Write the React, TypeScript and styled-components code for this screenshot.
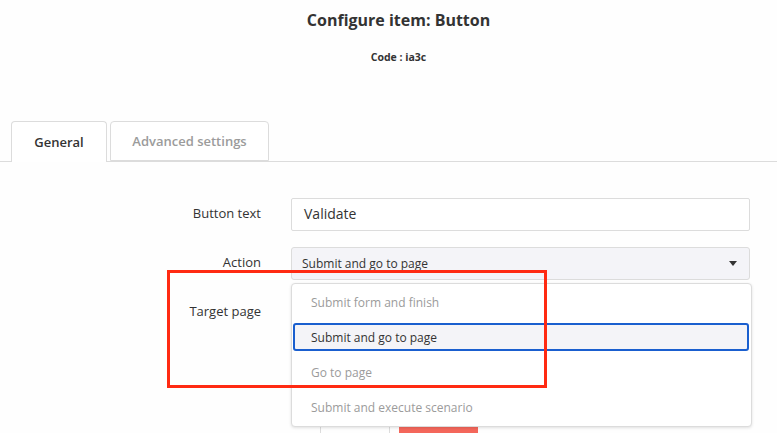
import React from 'react';
import styled, { createGlobalStyle } from 'styled-components';

const colors = {
  TEXT: '#333333',
  MUTED: '#9b9b9b',
  BORDER: '#dcdcdc',
  FIELD: '#f4f4f8',
  BLUE: '#1a5fcf',
  ANNOTATION: '#ff2a12',
  SALMON: '#f4675b',
};

const GlobalStyle = createGlobalStyle`
  html, body {
    margin: 0;
    padding: 0;
    background: #fefefe;
    height: 433px;
    overflow: hidden;
  }
  body {
    font-family: 'Open Sans', 'Liberation Sans', sans-serif;
    color: ${colors.TEXT};
  }
  * { box-sizing: border-box; }
`;

const Page = styled.div`
  width: 777px;
  height: 433px;
  position: relative;
  overflow: hidden;
`;

const Header = styled.header`
  padding: 9px 0 0 20px;
  text-align: center;
`;

const Title = styled.h1`
  margin: 0;
  font-size: 16px;
  line-height: 22px;
  font-weight: 700;
`;

const Code = styled.div`
  margin-top: 19px;
  font-size: 10.5px;
  line-height: 14px;
  font-weight: 700;
`;

const TabBar = styled.div`
  display: flex;
  align-items: flex-end;
  gap: 3px;
  margin-top: 57px;
  padding-left: 11px;
  height: 41px;
  border-bottom: 1px solid ${colors.BORDER};
`;

const Tab = styled.div<{ $active?: boolean }>`
  height: ${(p) => (p.$active ? '41px' : '40px')};
  margin-bottom: ${(p) => (p.$active ? '-1px' : '0')};
  width: ${(p) => (p.$active ? '96px' : '159px')};
  display: flex;
  align-items: center;
  justify-content: center;
  background: #fff;
  border: 1px solid ${colors.BORDER};
  border-bottom: ${(p) => (p.$active ? 'none' : `1px solid ${colors.BORDER}`)};
  border-radius: 4px 4px 0 0;
  font-size: 13px;
  font-weight: 600;
  color: ${(p) => (p.$active ? colors.TEXT : colors.MUTED)};
  padding-bottom: ${(p) => (p.$active ? '1px' : '0')};
`;

const Form = styled.div`
  position: relative;
  display: grid;
  grid-template-columns: 250px 1fr;
  column-gap: 30px;
  row-gap: 16px;
  padding: 36px 27px 0 11px;
`;

const Label = styled.label`
  text-align: right;
  font-size: 13px;
  line-height: 31px;
  height: 33px;
`;

const Field = styled.div`
  position: relative;
`;

const TextInput = styled.div`
  height: 33px;
  border: 1px solid ${colors.BORDER};
  border-radius: 2px;
  background: #fff;
  padding: 0 12px 2px;
  display: flex;
  align-items: center;
  font-size: 14px;
`;

const SelectBox = styled.div`
  height: 33px;
  border: 1px solid ${colors.BORDER};
  border-radius: 3px;
  background: ${colors.FIELD};
  padding: 0 10px;
  display: flex;
  align-items: center;
  justify-content: space-between;
  font-size: 12px;
`;

const Caret = styled.span`
  width: 0;
  height: 0;
  margin-right: 2px;
  border-left: 4px solid transparent;
  border-right: 4px solid transparent;
  border-top: 5px solid #333;
`;

const Menu = styled.ul`
  position: absolute;
  top: calc(100% + 3px);
  left: 0;
  right: -2px;
  margin: 0;
  padding: 4px 2px 5px 1px;
  list-style: none;
  background: #fff;
  border: 1px solid ${colors.BORDER};
  border-radius: 4px;
  box-shadow: 0 1px 3px rgba(0, 0, 0, 0.12);
  display: flex;
  flex-direction: column;
  gap: 7px;
  z-index: 5;
`;

const MenuItem = styled.li<{ $selected?: boolean }>`
  height: 28px;
  display: flex;
  align-items: center;
  padding-left: 16px;
  font-size: 12px;
  border-radius: 3px;
  color: ${(p) => (p.$selected ? colors.TEXT : colors.MUTED)};
  background: ${(p) => (p.$selected ? colors.FIELD : 'transparent')};
  border: ${(p) => (p.$selected ? `2px solid ${colors.BLUE}` : '2px solid transparent')};
`;

const ButtonGroup = styled.div`
  grid-column: 2;
  display: flex;
  gap: 9px;
  padding-left: 29px;
`;

const GroupBox = styled.div`
  width: 70px;
  height: 120px;
  border-left: 1px solid ${colors.BORDER};
  border-right: 1px solid ${colors.BORDER};
`;

const DangerButton = styled.div`
  width: 79px;
  height: 60px;
  margin-top: 80px;
  background: ${colors.SALMON};
`;

const Annotation = styled.div`
  position: absolute;
  left: 167px;
  top: 108px;
  width: 380px;
  height: 118px;
  border: 3px solid ${colors.ANNOTATION};
  z-index: 10;
  pointer-events: none;
`;

const options = [
  'Submit form and finish',
  'Submit and go to page',
  'Go to page',
  'Submit and execute scenario',
];

export default function App() {
  const selected = 'Submit and go to page';
  return (
    <Page>
      <GlobalStyle />
      <Header>
        <Title>Configure item: Button</Title>
        <Code>Code : ia3c</Code>
      </Header>
      <TabBar>
        <Tab $active>General</Tab>
        <Tab>Advanced settings</Tab>
      </TabBar>
      <Form>
        <Label>Button text</Label>
        <Field>
          <TextInput>Validate</TextInput>
        </Field>

        <Label>Action</Label>
        <Field>
          <SelectBox>
            <span>{selected}</span>
            <Caret />
          </SelectBox>
          <Menu>
            {options.map((o) => (
              <MenuItem key={o} $selected={o === selected}>
                {o}
              </MenuItem>
            ))}
          </Menu>
        </Field>

        <Label>Target page</Label>
        <Field>
          <SelectBox />
        </Field>

        <ButtonGroup>
          <GroupBox />
          <DangerButton />
        </ButtonGroup>

        <Annotation />
      </Form>
    </Page>
  );
}
